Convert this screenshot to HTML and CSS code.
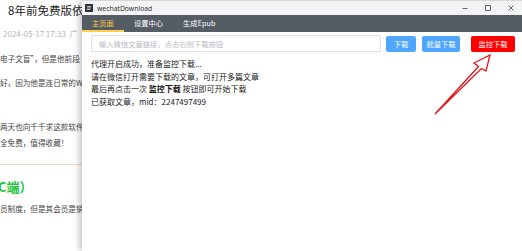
FILE: index.html
```html
<!DOCTYPE html>
<html lang="zh-CN">
<head>
    <meta charset="UTF-8">
    <meta name="viewport" content="width=device-width, initial-scale=1.0">
    <title>wechatDownload</title>
    <link rel="stylesheet" href="styles.css">
</head>
<body>
    <div class="screen">
        <div class="article">
            <div class="art-title">8年前免费版依</div>
            <div class="art-date">2024-05-17 17:33&nbsp;&nbsp;广</div>
            <div class="art-line l1">电子文盲”，但是他前段</div>
            <div class="art-line l2">好，因为他是连日常的W</div>
            <div class="art-line l3">两天也向千千求这款软件</div>
            <div class="art-line l4">全免费，值得收藏！</div>
            <div class="art-rule"></div>
            <div class="art-green">C端）</div>
            <div class="art-line l5">员制度，但是其会员是销</div>
        </div>

        <div class="window">
            <div class="titlebar">
                <span class="app-icon">
                    <svg width="8" height="8" viewBox="0 0 8 8">
                        <rect width="8" height="8" fill="#2c3440"/>
                        <path d="M2 2.5h4M2 4h4M2 5.5h3" stroke="#fff" stroke-width="0.7"/>
                    </svg>
                </span>
                <span class="app-title">wechatDownload</span>
                <div class="win-controls">
                    <span class="ctl">
                        <svg width="8" height="8" viewBox="0 0 8 8"><path d="M1.5 4.5h5" stroke="#444" stroke-width="0.8"/></svg>
                    </span>
                    <span class="ctl">
                        <svg width="8" height="8" viewBox="0 0 8 8"><rect x="1.5" y="1.5" width="5" height="5" fill="none" stroke="#444" stroke-width="0.8"/></svg>
                    </span>
                    <span class="ctl">
                        <svg width="8" height="8" viewBox="0 0 8 8"><path d="M1.5 1.5l5 5M6.5 1.5l-5 5" stroke="#444" stroke-width="0.8"/></svg>
                    </span>
                </div>
            </div>

            <ul class="menu">
                <li class="active">主页面</li>
                <li>设置中心</li>
                <li>生成Epub</li>
            </ul>

            <div class="toolbar">
                <input type="text" class="url-input" placeholder="输入微信文章链接，点击右侧下载按钮">
                <button class="btn btn-blue btn-single">下载</button>
                <button class="btn btn-blue btn-batch">批量下载</button>
                <button class="btn btn-red">监控下载</button>
            </div>

            <div class="log">
                <p>代理开启成功，准备监控下载...</p>
                <p>请在微信打开需要下载的文章，可打开多篇文章</p>
                <p>最后再点击一次 <b>监控下载</b> 按钮即可开始下载</p>
                <p>已获取文章，mid：2247497499</p>
            </div>
        </div>

        <svg class="arrow" width="522" height="251" viewBox="0 0 522 251">
            <path d="M435 114 L478.5 66.5 L474 63 L490 55 L486 71 L481.5 68.5 Z" fill="#fff" stroke="#e3141b" stroke-width="1.3" stroke-linejoin="miter"/>
        </svg>
    </div>
</body>
</html>
```

FILE: styles.css
```css
body {
    margin: 0;
    padding: 0;
    font-family: "Noto Sans CJK SC", "Noto Sans", sans-serif;
    background-color: #fff;
}

.screen {
    position: relative;
    display: flex;
    width: 522px;
    height: 251px;
    overflow: hidden;
}

/* background article behind the app window */
.article {
    width: 82px;
    flex-shrink: 0;
    overflow: hidden;
    white-space: nowrap;
    background-color: #fff;
}

.art-title {
    margin: 3px 0 0 8px;
    font-size: 11.5px;
    line-height: 14px;
    color: #222;
}

.art-date {
    margin: 12px 0 0 3px;
    font-size: 8px;
    line-height: 10px;
    color: #b5b5b5;
}

.art-line {
    font-size: 7.6px;
    line-height: 10px;
    color: #444;
}

.l1 { margin-top: 15px; }
.l2 { margin-top: 14px; }
.l3 { margin-top: 34px; }
.l4 { margin-top: 6px; }
.l5 { margin-top: 8px; }

.art-rule {
    margin-top: 16px;
    height: 1px;
    background-color: #f2dcb4;
}

.art-green {
    margin: 13px 0 0 -2px;
    font-size: 13px;
    line-height: 18px;
    font-weight: bold;
    color: #1cc43a;
}

/* app window */
.window {
    flex: 1;
    display: flex;
    flex-direction: column;
    background-color: #fff;
    box-shadow: -3px 0 6px rgba(0, 0, 0, 0.22);
    z-index: 1;
}

.titlebar {
    height: 15px;
    display: flex;
    align-items: center;
    padding-left: 3px;
    background-color: #f3f3f3;
    border-top: 1px solid #d8d8d8;
    box-sizing: border-box;
}

.app-icon {
    display: flex;
    width: 8px;
    height: 8px;
}

.app-title {
    margin-left: 4px;
    font-family: "Noto Sans", sans-serif;
    font-size: 6.8px;
    color: #333;
}

.win-controls {
    margin-left: auto;
    display: flex;
}

.ctl {
    width: 23px;
    display: flex;
    justify-content: center;
}

.menu {
    list-style: none;
    margin: 0;
    padding: 0;
    height: 17px;
    display: flex;
    background-color: #545c64;
}

.menu li {
    padding: 0 10px;
    font-size: 7.3px;
    line-height: 17px;
    color: #fff;
    box-sizing: border-box;
}

.menu li.active {
    color: #ffd04b;
    border-bottom: 2px solid #ffd04b;
    line-height: 16px;
}

.toolbar {
    display: flex;
    align-items: center;
    padding: 3px 7px 0 9px;
}

.url-input {
    flex: 1;
    min-width: 0;
    height: 17px;
    margin: 0;
    padding: 0 7px;
    border: 1px solid #dcdfe6;
    border-radius: 2px;
    box-sizing: border-box;
    font-family: inherit;
    font-size: 7.3px;
    color: #606266;
}

.url-input::placeholder {
    color: #b8bcc4;
}

.btn {
    height: 16px;
    margin: 0;
    padding: 0;
    border: none;
    border-radius: 2px;
    font-family: inherit;
    font-size: 7.3px;
    color: #fff;
    cursor: pointer;
}

.btn-blue {
    background-color: #4ea6ff;
}

.btn-single {
    width: 30px;
    margin-left: 5px;
}

.btn-batch {
    width: 38px;
    margin-left: 6px;
}

.btn-red {
    width: 44px;
    margin-left: 11px;
    background-color: #ff0000;
}

.log {
    padding: 6px 9px;
    font-size: 8px;
    line-height: 12.7px;
    color: #222;
}

.log p {
    margin: 0;
    white-space: nowrap;
}

.log b {
    color: #111;
}

/* annotation arrow drawn over the screenshot */
.arrow {
    position: absolute;
    top: 0;
    left: 0;
    z-index: 2;
    pointer-events: none;
}
```
